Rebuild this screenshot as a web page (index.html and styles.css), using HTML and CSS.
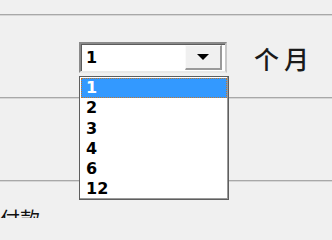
FILE: index.html
```html
<!DOCTYPE html>
<html>
<head>
<meta charset="utf-8">
<link rel="stylesheet" href="styles.css">
</head>
<body>
<div class="page">
  <div class="rule rule-top"></div>
  <div class="row">
    <div class="combo">
      <div class="combo-field">
        <span class="combo-value">1</span>
        <span class="combo-btn"><span class="arrow"></span></span>
      </div>
      <ul class="dropdown">
        <li class="item selected">1</li>
        <li class="item">2</li>
        <li class="item">3</li>
        <li class="item">4</li>
        <li class="item">6</li>
        <li class="item">12</li>
      </ul>
    </div>
    <span class="label">个月</span>
  </div>
  <div class="rule"></div>
  <div class="spacer"></div>
  <div class="rule"></div>
  <div class="foot">付款</div>
</div>
</body>
</html>
```
FILE: styles.css
```css
html, body {
  margin: 0;
  padding: 0;
  background: #f0f0f0;
}
.page {
  width: 332px;
  height: 218px;
  overflow: hidden;
  background: #f0f0f0;
  font-family: "Noto Sans CJK SC", "DejaVu Sans", sans-serif;
}
.rule {
  height: 1px;
  border-top: 1px solid #a8a8a8;
  background: #d6d6d6;
}
.rule-top {
  margin-top: 14px;
}
.row {
  display: flex;
  align-items: center;
  padding: 26px 0 24px 79px;
}
.combo {
  position: relative;
  width: 148px;
  height: 31px;
  box-sizing: border-box;
}
.combo-field {
  display: flex;
  align-items: stretch;
  height: 31px;
  box-sizing: border-box;
  border-top: 2px solid #8a8a8a;
  border-left: 2px solid #8a8a8a;
  border-right: 2px solid #c8c8c8;
  border-bottom: 2px solid #e8e8e8;
  background: #fff;
  box-shadow: inset 1px 1px 0 #5c5c5c;
}
.combo-value {
  flex: 1;
  padding-left: 5px;
  font-family: "DejaVu Sans", sans-serif;
  font-weight: bold;
  font-size: 16px;
  line-height: 27px;
  color: #000;
}
.combo-btn {
  width: 37px;
  margin: 1px 3px 1px 0;
  box-sizing: border-box;
  background: #f0f0f0;
  border-top: 1px solid #fafafa;
  border-left: 1px solid #fafafa;
  border-right: 2px solid #9a9a9a;
  border-bottom: 2px solid #9a9a9a;
  display: flex;
  align-items: center;
  justify-content: center;
}
.arrow {
  width: 0;
  height: 0;
  border-left: 6px solid transparent;
  border-right: 6px solid transparent;
  border-top: 6px solid #000;
}
.dropdown {
  position: absolute;
  top: 34px;
  left: 0;
  width: 150px;
  height: 124px;
  box-sizing: border-box;
  margin: 0;
  padding: 1px 1px;
  list-style: none;
  background: #fff;
  border: 1px solid #5e5e5e;
  box-shadow: inset -1px -1px 0 #9a9a9a;
  z-index: 2;
}
.item {
  height: 20.3px;
  line-height: 20px;
  padding-left: 5px;
  font-family: "DejaVu Sans", sans-serif;
  font-weight: bold;
  font-size: 16px;
  color: #000;
  box-sizing: border-box;
}
.item.selected {
  background: #3399ff;
  color: #fff;
  outline: 1px dotted #c07830;
  outline-offset: -1px;
}
.label {
  margin-left: 27px;
  font-size: 25px;
  font-weight: 500;
  letter-spacing: 5px;
  line-height: 28px;
  color: #1a1a1a;
}
.spacer {
  height: 81px;
}
.foot {
  margin-top: 27px;
  padding-left: 0;
  font-size: 20px;
  line-height: 20px;
  color: #111;
}
```
